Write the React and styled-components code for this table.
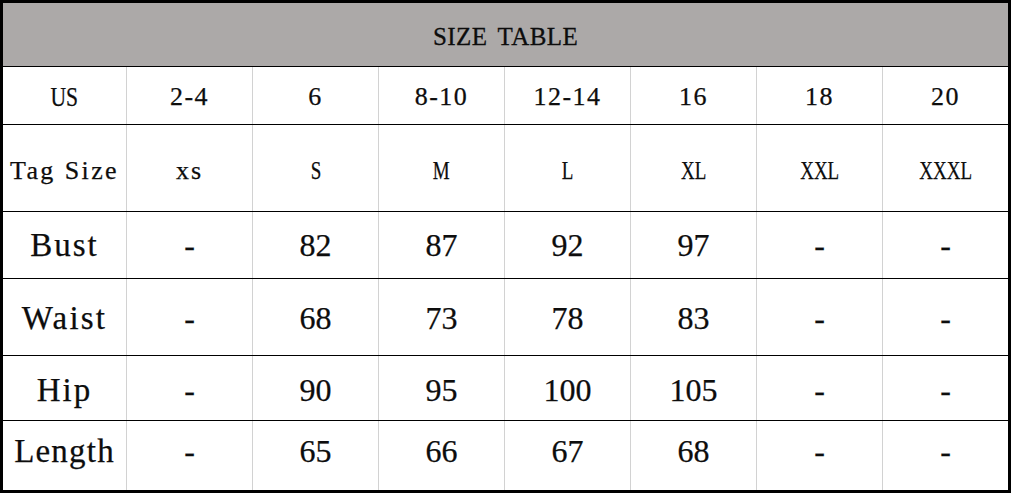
import React from 'react';
import styled, { createGlobalStyle } from 'styled-components';

const GlobalStyle = createGlobalStyle`
  html, body {
    margin: 0;
    padding: 0;
    background: #ffffff;
  }
  body {
    font-family: "Liberation Serif", "Times New Roman", serif;
    color: #0d0d0d;
  }
`;

// 表全体
const Table = styled.div`
  width: 1011px;
  height: 493px;
  box-sizing: border-box;
  border: 3px solid #000;
  background: #fff;
  display: flex;
  flex-direction: column;
`;

// 見出し
const TitleBar = styled.div`
  height: 63px;
  background: #aca9a8;
  display: flex;
  align-items: center;
  justify-content: center;
  padding-top: 4px;
  box-sizing: border-box;
  font-size: 25px;
  letter-spacing: 0.4px;
  word-spacing: 4px;
  -webkit-text-stroke: 0.3px #0d0d0d;
`;

// 行
const Row = styled.div`
  display: grid;
  grid-template-columns: 123px repeat(7, 126px);
  height: ${p => p.h}px;
  border-top: 1px solid #000;
`;

// セル（dy が負なら上へずらす）
const Cell = styled.div`
  display: flex;
  align-items: center;
  justify-content: center;
  box-sizing: border-box;
  border-left: ${p => (p.first ? 'none' : '1px solid #d2d2d2')};
  padding-top: ${p => Math.max(p.dy || 0, 0)}px;
  padding-bottom: ${p => Math.max(-(p.dy || 0), 0)}px;
  font-size: ${p => p.size}px;
  letter-spacing: ${p => p.ls || 0}px;
  white-space: nowrap;
  -webkit-text-stroke: 0.25px #0d0d0d;
`;

// 幅の狭い文字
const Narrow = styled.span`
  display: inline-block;
  transform: scaleX(${p => p.sx || 0.78});
`;

const rows = [
  {
    h: 57, dy: 3,
    label: { text: 'US', size: 27, ls: 0, narrow: 0.8 },
    values: ['2-4', '6', '8-10', '12-14', '16', '18', '20'],
    size: 26, ls: 1.5,
  },
  {
    h: 86, dy: 6,
    label: { text: 'Tag Size', size: 26, ls: 2.4 },
    values: ['xs', 'S', 'M', 'L', 'XL', 'XXL', 'XXXL'],
    size: 25, ls: 0, narrow: 0.76,
  },
  {
    h: 66, dy: 0,
    label: { text: 'Bust', size: 33, ls: 2 },
    values: ['-', '82', '87', '92', '97', '-', '-'],
    size: 32, ls: 0,
  },
  {
    h: 76, dy: 2,
    label: { text: 'Waist', size: 33, ls: 2.2 },
    values: ['-', '68', '73', '78', '83', '-', '-'],
    size: 32, ls: 0,
  },
  {
    h: 64, dy: 4,
    label: { text: 'Hip', size: 33, ls: 2 },
    values: ['-', '90', '95', '100', '105', '-', '-'],
    size: 32, ls: 0,
  },
  {
    h: 69, dy: -8,
    label: { text: 'Length', size: 33, ls: 1.2 },
    values: ['-', '65', '66', '67', '68', '-', '-'],
    size: 32, ls: 0,
  },
];

const renderText = (text, narrow) =>
  narrow ? <Narrow sx={narrow}>{text}</Narrow> : text;

const App = () => (
  <>
    <GlobalStyle />
    <Table>
      <TitleBar>SIZE TABLE</TitleBar>
      {rows.map(row => (
        <Row key={row.label.text} h={row.h}>
          <Cell first size={row.label.size} ls={row.label.ls} dy={row.dy}>
            {renderText(row.label.text, row.label.narrow)}
          </Cell>
          {row.values.map((v, i) => {
            const isXs = v === 'xs';
            return (
              <Cell
                key={i}
                size={isXs ? 26 : row.size}
                ls={isXs ? 2 : row.ls}
                dy={row.dy}
              >
                {renderText(v, isXs ? 0 : row.narrow)}
              </Cell>
            );
          })}
        </Row>
      ))}
    </Table>
  </>
);

export default App;
